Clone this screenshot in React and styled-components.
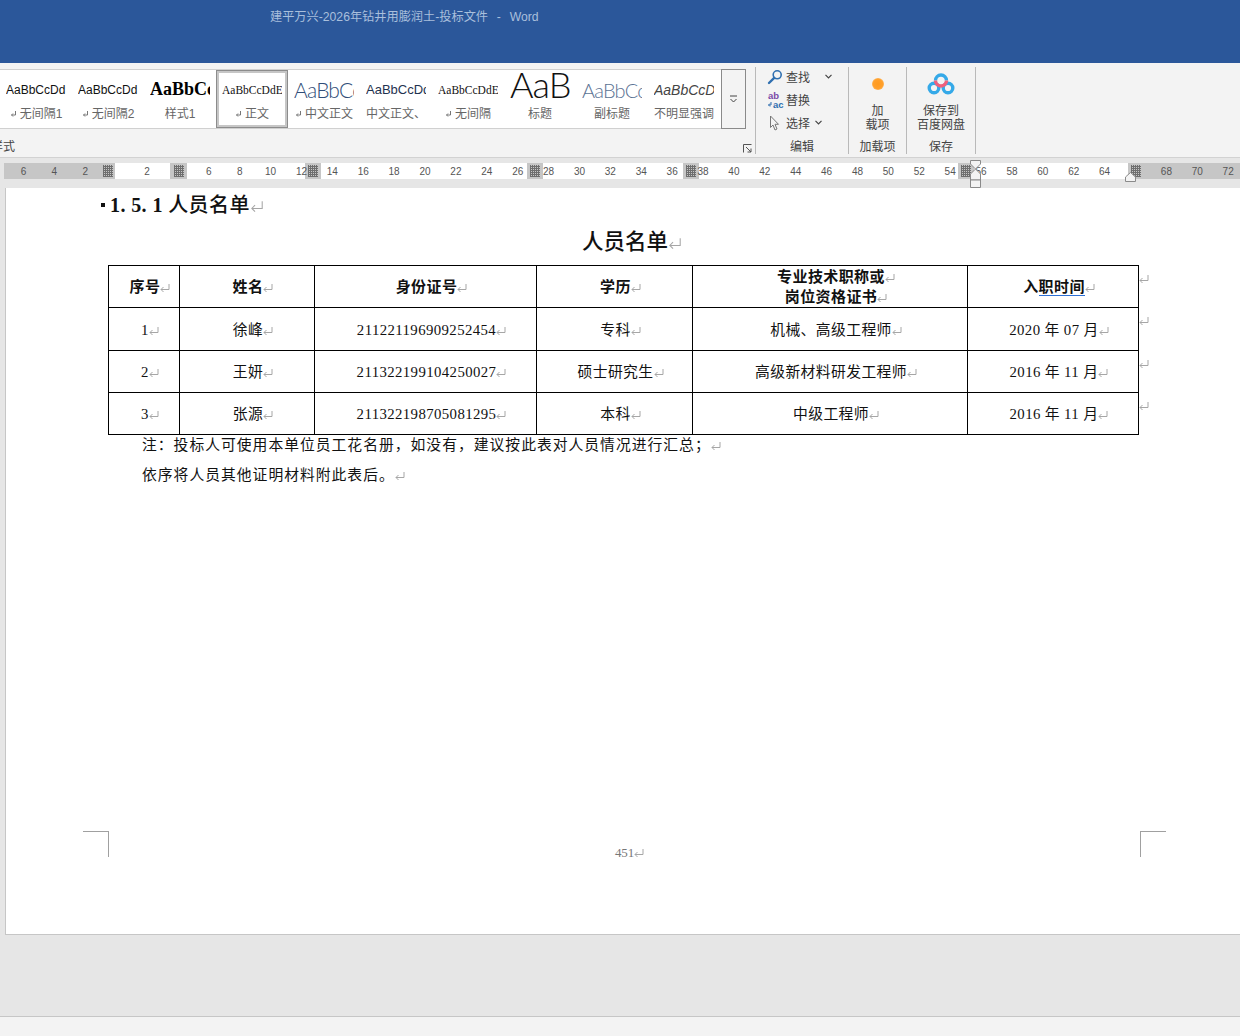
import React from 'react'
import styled, { createGlobalStyle } from 'styled-components'

const docFont = `"Liberation Serif", "Noto Sans CJK SC", serif`
const uiFont = `"Liberation Sans", "Noto Sans CJK SC", sans-serif`
const thinFont = `Lato, "Liberation Sans", sans-serif`

const Global = createGlobalStyle`
  html, body { margin: 0; padding: 0; background: #e6e6e6; }
  * { box-sizing: border-box; }
`

const Window = styled.div`
  width: 1240px;
  height: 1036px;
  display: flex;
  flex-direction: column;
  overflow: hidden;
  font-family: ${uiFont};
`

const TitleBar = styled.div`
  height: 63px;
  flex: none;
  background: #2b579a;
  color: #a9bfdc;
  font-size: 12.2px;
  line-height: 17px;
  padding: 9px 0 0 270px;
  white-space: pre;
  word-spacing: 1px;
`

const Ribbon = styled.div`
  height: 95px;
  flex: none;
  display: flex;
  background: #f3f3f3;
  border-bottom: 1px solid #d2d2d2;
  padding-top: 4px;
`

const Group = styled.div`
  width: ${p => p.$w}px;
  flex: none;
  height: 87px;
  display: flex;
  flex-direction: column;
  border-right: 1px solid #b9b9b9;
  position: relative;
  overflow: hidden;
`

const GroupBody = styled.div`
  flex: 1;
  min-height: 0;
  display: flex;
  flex-direction: column;
  align-items: ${p => p.$align || 'center'};
  margin-top: ${p => p.$pull || 0}px;
`

const GroupLabel = styled.div`
  height: 16px;
  flex: none;
  font-size: 12px;
  line-height: 18px;
  color: #444;
  text-align: ${p => p.$left ? 'left' : 'center'};
  margin-left: ${p => p.$shift || 0}px;
`

const StyleRow = styled.div`
  display: flex;
  padding-top: 2px;
  height: 62px;
  width: 755px;
  flex: none;
`

const Gallery = styled.div`
  width: 721px;
  height: 60px;
  display: flex;
  background: #fff;
  border-top: 1px solid #d0d0d0;
  border-bottom: 1px solid #d0d0d0;
`

const StyleCard = styled.div`
  width: 72px;
  flex: none;
  height: 58px;
  display: flex;
  flex-direction: column;
  align-items: center;
  padding: 0 6px;
  overflow: hidden;
  outline: ${p => p.$on ? '1px solid #8c8c8c' : 'none'};
  border: ${p => p.$on ? '3px solid #c6c6c6' : '3px solid transparent'};
  outline-offset: -1px;
`

const Sample = styled.div`
  height: 33px;
  width: 60px;
  flex: none;
  display: flex;
  align-items: center;
  overflow: hidden;
  white-space: nowrap;
  padding-bottom: ${p => p.$lift || 0}px;
  font-family: ${p => p.$font || uiFont};
  font-size: ${p => p.$size}px;
  font-weight: ${p => p.$weight || 400};
  font-style: ${p => p.$italic ? 'italic' : 'normal'};
  letter-spacing: ${p => p.$track || 0}px;
  color: ${p => p.$color || '#111'};
`

const StyleName = styled.div`
  font-size: 12px;
  line-height: 16px;
  color: #666;
  white-space: nowrap;
  display: flex;
  align-items: center;
  gap: 3px;
`

const GalleryMore = styled.div`
  width: 25px;
  height: 60px;
  background: #f3f3f3;
  border: 1px solid #8a8a8a;
  display: flex;
  align-items: center;
  justify-content: center;
`

const Launcher = styled.svg`
  position: absolute;
  right: 3px;
  bottom: 1px;
`

const EditRow = styled.div`
  height: 23px;
  flex: none;
  display: flex;
  align-items: center;
  font-size: 12px;
  color: #444;
  padding-left: 11px;
  width: 100%;
`

const EditIcon = styled.span`
  width: 19px;
  flex: none;
  display: flex;
  align-items: center;
`

const Chevron = styled.svg`
  margin-left: ${p => p.$gap}px;
`

const BigIcon = styled.div`
  height: 37px;
  flex: none;
  display: flex;
  align-items: center;
  justify-content: center;
`

const BigText = styled.div`
  font-size: 12px;
  line-height: 14px;
  color: #444;
  text-align: center;
  white-space: pre-line;
`

const Dot = styled.div`
  width: 12px;
  height: 12px;
  margin-top: -3px;
  border-radius: 50%;
  background: radial-gradient(circle, #ff9a1f 0%, #ffa02c 55%, #ffd9a8 100%);
`

const LogoSvg = styled.svg`
  margin-top: -3px;
`

const RulerBar = styled.div`
  height: 30px;
  flex: none;
  background: #e6e6e6;
  padding: 5px 0 0 4px;
  position: relative;
`

const Ruler = styled.div`
  height: 16px;
  display: flex;
  position: relative;
`

const Band = styled.div`
  width: ${p => p.$w}px;
  flex: none;
  background: ${p => p.$white ? '#fff' : '#c6c6c6'};
  display: flex;
  align-items: center;
  justify-content: ${p => p.$place || 'center'};
  padding: ${p => p.$pad || '0'};
`

const Hatch = styled.div`
  width: 10px;
  height: 12px;
  background-color: #c6c6c6;
  background-image:
    repeating-linear-gradient(0deg, #6e6e6e 0 1px, transparent 1px 2px),
    repeating-linear-gradient(90deg, #6e6e6e 0 1px, transparent 1px 2px);
`

const Ticks = styled.div`
  position: absolute;
  left: 4px;
  top: 0;
  height: 16px;
  display: flex;
`

const Tick = styled.span`
  width: 30.9px;
  flex: none;
  text-align: center;
  font-size: 10px;
  line-height: 17px;
  color: #555;
`

const MarginHandle = styled.svg`
  position: absolute;
  left: ${p => p.$x}px;
  top: ${p => p.$y}px;
`

const DocArea = styled.div`
  flex: 1;
  min-height: 0;
  background: #e6e6e6;
  padding: 0 0 81px 5px;
  display: flex;
`

const Page = styled.div`
  flex: 1;
  background: #fff;
  border-left: 1px solid #c6c6c6;
  border-bottom: 1px solid #c6c6c6;
  display: flex;
  flex-direction: column;
  font-family: ${docFont};
  color: #111;
`

const Body = styled.div`
  flex: 1;
  padding-left: 102px;
  display: flex;
  flex-direction: column;
`

const Heading = styled.div`
  height: 35px;
  font-size: 20px;
  line-height: 35px;
  font-weight: 500;
  letter-spacing: 0.4px;
  padding-left: 2px;
  position: relative;
  white-space: pre;
`

const HeadingNumber = styled.span`
  font-weight: 700;
`

const KeepMark = styled.span`
  position: absolute;
  left: -7px;
  top: 15px;
  width: 4px;
  height: 4px;
  background: #111;
`

const TableTitle = styled.div`
  height: 42px;
  width: 1034px;
  text-align: center;
  font-size: 21.5px;
  line-height: 38px;
  font-weight: 500;
`

const Roster = styled.table`
  border-collapse: collapse;
  table-layout: fixed;
  width: 1044px;
`

const Cell = styled.td`
  border: 1px solid #000;
  padding: 1px 0 0 2px;
  text-align: center;
  vertical-align: middle;
  font-size: ${p => p.$head ? 15 : 14.8}px;
  font-weight: ${p => p.$head ? 700 : 400};
  letter-spacing: 0.4px;
  line-height: 20px;
  white-space: pre-line;
`

const RowEnd = styled.td`
  padding: 6px 0 0 0;
  vertical-align: top;
  line-height: 12px;
`

const Row = styled.tr`
  height: ${p => p.$h}px;
`

const Underlined = styled.span`
  border-bottom: 1.5px solid #2b6fd6;
  line-height: 15px;
  display: inline-block;
`

const Note = styled.p`
  margin: 0;
  padding-left: 34px;
  height: 30px;
  font-size: 14.8px;
  line-height: 21px;
  letter-spacing: 1px;
  white-space: pre;
`

const PageFooter = styled.div`
  height: 103px;
  flex: none;
  display: flex;
  justify-content: space-between;
  padding: 0 74px 0 77px;
`

const CropMark = styled.div`
  width: 26px;
  height: 26px;
  border-top: 1px solid #a0a0a0;
  ${p => p.$side === 'left' ? 'border-right: 1px solid #a0a0a0;' : 'border-left: 1px solid #a0a0a0;'}
`

const PageNumber = styled.div`
  font-size: 13px;
  color: #777;
  line-height: 14px;
  padding-top: 15px;
  letter-spacing: -0.2px;
`

const StatusBar = styled.div`
  height: 20px;
  flex: none;
  background: #f3f3f3;
  border-top: 1px solid #c6c6c6;
`

// the paragraph mark hangs past the text, it does not count when centering
const Mark = styled.svg`
  margin: 0 ${p => p.$hang}px 0 0;
  vertical-align: -1px;
`

const ParaMark = ({ big }) => (
  <Mark $hang={big ? -14 : -10} width={big ? 14 : 10} height={big ? 13 : 10} viewBox="0 0 10 10" fill="none" stroke="#a6a6a6" strokeWidth={big ? 0.8 : 1}>
    <path d="M9 1V6.5H1M3.5 4L1 6.5L3.5 9" />
  </Mark>
)

const SmallMark = () => (
  <svg width="7" height="8" viewBox="0 0 7 8" fill="none" stroke="#777" strokeWidth="1">
    <path d="M5.5 1V5H1.5M3 3.5L1.5 5L3 6.5" />
  </svg>
)

const samples = [
  { text: 'AaBbCcDd', size: 12, name: '无间隔1', mark: true },
  { text: 'AaBbCcDd', size: 12, name: '无间隔2', mark: true },
  { text: 'AaBbCc', size: 18, weight: 700, font: docFont, color: '#000', name: '样式1' },
  { text: 'AaBbCcDdEe', size: 11.5, font: docFont, name: '正文', mark: true, on: true },
  { text: 'AaBbCc', size: 21, weight: 300, track: -0.8, font: thinFont, color: '#2f4d78', name: '中文正文', mark: true },
  { text: 'AaBbCcDd', size: 13, color: '#1f3350', name: '中文正文、' },
  { text: 'AaBbCcDdEe', size: 11.5, font: docFont, name: '无间隔', mark: true },
  { text: 'AaB', size: 36, weight: 300, track: -1, font: thinFont, color: '#111', name: '标题', lift: 11 },
  { text: 'AaBbCc', size: 20, weight: 300, track: -0.8, font: thinFont, color: '#5b7394', name: '副标题' },
  { text: 'AaBbCcDd', size: 14, italic: true, color: '#444', name: '不明显强调' },
]

const Finder = () => (
  <svg width="16" height="16" viewBox="0 0 16 16" fill="none">
    <circle cx="10.2" cy="5.8" r="4" stroke="#2f6fb0" strokeWidth="1.6" />
    <path d="M7.2 8.8L2 14" stroke="#2f6fb0" strokeWidth="2.4" strokeLinecap="round" />
  </svg>
)

const Replace = () => (
  <svg width="18" height="16" viewBox="0 0 18 16">
    <text x="1" y="7" fontSize="9.5" fontWeight="700" fontFamily="Liberation Sans" fill="#7a4aa8">ab</text>
    <text x="6" y="15.5" fontSize="9.5" fontWeight="700" fontFamily="Liberation Sans" fill="#2f6fb0">ac</text>
    <path d="M4 10V13H1.5M3 11.5L1.5 13L3 14.5" fill="none" stroke="#2f6fb0" strokeWidth="1" />
  </svg>
)

const Pointer = () => (
  <svg width="14" height="16" viewBox="0 0 14 16" fill="none" stroke="#777" strokeWidth="1">
    <path d="M3.5 1V12.5L6 10L8 15L10 14L8 9.3H11.5Z" />
  </svg>
)

const Down = ({ gap }) => (
  <Chevron $gap={gap} width="7" height="5" viewBox="0 0 7 5" fill="none" stroke="#444" strokeWidth="1.2">
    <path d="M0.5 0.8L3.5 3.8L6.5 0.8" />
  </Chevron>
)

const BaiduCloud = () => (
  <LogoSvg width="28" height="22" viewBox="0 0 28 22" fill="none" strokeWidth="3.4">
    <circle cx="7" cy="15" r="4.8" stroke="#35a9e8" />
    <circle cx="21" cy="15" r="4.8" stroke="#35a9e8" />
    <path d="M8.5 7.5A5.5 5.5 0 0 1 19.5 7.5" stroke="#35a9e8" />
    <path d="M8.5 7.5A5.5 5.5 0 0 0 19.5 7.5" stroke="#f0607c" />
  </LogoSvg>
)

const bands = [
  { w: 111, hatch: true, place: 'flex-end', pad: '0 2px 0 0' }, { w: 2, white: true }, { w: 53, white: true },
  { w: 17, hatch: true }, { w: 118, white: true },
  { w: 16, hatch: true }, { w: 206, white: true }, { w: 16, hatch: true }, { w: 140, white: true },
  { w: 16, hatch: true }, { w: 259, white: true }, { w: 16, hatch: true }, { w: 154, white: true },
  { w: 2 }, { w: 110, hatch: true, place: 'flex-start', pad: '0 0 0 1px' },
]

const tickLabels = ['6', '4', '2', '', '2', '', '6', '8', '10', '12', '14', '16', '18', '20', '22', '24', '26', '28', '30', '32', '34', '36', '38', '40', '42', '44', '46', '48', '50', '52', '54', '56', '58', '60', '62', '64', '', '68', '70', '72']

const rows = [
  ['1', '徐峰', '211221196909252454', '专科', '机械、高级工程师', '2020 年 07 月', 43],
  ['2', '王妍', '211322199104250027', '硕士研究生', '高级新材料研发工程师', '2016 年 11 月', 42],
  ['3', '张源', '211322198705081295', '本科', '中级工程师', '2016 年 11 月', 42],
]

const App = () => {
  return (
    <Window>
      <Global />
      <TitleBar>建平万兴-2026年钻井用膨润土-投标文件  -  Word</TitleBar>

      <Ribbon>
        <Group $w={756}>
          <StyleRow>
            <Gallery>
              {samples.map((s, i) => (
                <StyleCard key={i} $on={s.on}>
                  <Sample $size={s.size} $font={s.font} $weight={s.weight} $italic={s.italic} $color={s.color} $lift={s.lift} $track={s.track}>{s.text}</Sample>
                  <StyleName>{s.mark && <SmallMark />}{s.name}</StyleName>
                </StyleCard>
              ))}
            </Gallery>
            <GalleryMore>
              <svg width="9" height="8" viewBox="0 0 9 8" fill="none" stroke="#444" strokeWidth="1">
                <path d="M1 1H8M1.5 4L4.5 7L7.5 4" />
              </svg>
            </GalleryMore>
          </StyleRow>
          <GroupBody />
          <GroupLabel $left $shift={-9}>样式</GroupLabel>
          <Launcher width="9" height="9" viewBox="0 0 9 9" fill="none" stroke="#555" strokeWidth="1">
            <path d="M0.5 8.5V0.5H8.5M3 3L8 8M8 4.5V8H4.5" />
          </Launcher>
        </Group>

        <Group $w={93}>
          <GroupBody $align="flex-start" $pull={-2}>
            <EditRow>
              <EditIcon><Finder /></EditIcon>查找<Down gap={15} />
            </EditRow>
            <EditRow>
              <EditIcon><Replace /></EditIcon>替换
            </EditRow>
            <EditRow>
              <EditIcon><Pointer /></EditIcon>选择<Down gap={5} />
            </EditRow>
          </GroupBody>
          <GroupLabel>编辑</GroupLabel>
        </Group>

        <Group $w={58}>
          <GroupBody>
            <BigIcon><Dot /></BigIcon>
            <BigText>{'加\n载项'}</BigText>
          </GroupBody>
          <GroupLabel>加载项</GroupLabel>
        </Group>

        <Group $w={69}>
          <GroupBody>
            <BigIcon><BaiduCloud /></BigIcon>
            <BigText>{'保存到\n百度网盘'}</BigText>
          </GroupBody>
          <GroupLabel>保存</GroupLabel>
        </Group>
      </Ribbon>

      <RulerBar>
        <Ruler>
          {bands.map((b, i) => (
            <Band key={i} $w={b.w} $white={b.white} $place={b.place} $pad={b.pad}>
              {b.hatch && <Hatch />}
            </Band>
          ))}
          <Ticks>
            {tickLabels.map((t, i) => <Tick key={i}>{t}</Tick>)}
          </Ticks>
        </Ruler>
        <MarginHandle $x={970} $y={2} width="11" height="28" viewBox="0 0 11 28" fill="#f3f3f3" stroke="#8a8a8a" strokeWidth="1">
          <path d="M0.5 0.5H10.5V4L5.5 9L0.5 4Z" />
          <path d="M5.5 9L10.5 14V20H0.5V14Z" />
          <path d="M0.5 20H10.5V27.5H0.5Z" />
        </MarginHandle>
        <MarginHandle $x={1125} $y={14} width="11" height="10" viewBox="0 0 11 10" fill="#f3f3f3" stroke="#8a8a8a" strokeWidth="1">
          <path d="M0.5 9.5V5L5.5 0.5L10.5 5V9.5Z" />
        </MarginHandle>
      </RulerBar>

      <DocArea>
        <Page>
          <Body>
            <Heading><KeepMark /><HeadingNumber>1. 5. 1</HeadingNumber> 人员名单<ParaMark big /></Heading>
            <TableTitle>人员名单<ParaMark big /></TableTitle>
            <Roster>
              <colgroup>
                <col width="71" />
                <col width="135" />
                <col width="222" />
                <col width="156" />
                <col width="275" />
                <col width="171" />
                <col width="14" />
              </colgroup>
              <tbody>
                <Row $h={42}>
                  <Cell $head>序号<ParaMark /></Cell>
                  <Cell $head>姓名<ParaMark /></Cell>
                  <Cell $head>身份证号<ParaMark /></Cell>
                  <Cell $head>学历<ParaMark /></Cell>
                  <Cell $head>专业技术职称或<ParaMark />{'\n'}岗位资格证书<ParaMark /></Cell>
                  <Cell $head>入<Underlined>职时间</Underlined><ParaMark /></Cell>
                  <RowEnd><ParaMark /></RowEnd>
                </Row>
                {rows.map(r => (
                  <Row key={r[0]} $h={r[6]}>
                    {r.slice(0, 6).map((v, i) => <Cell key={i}>{v}<ParaMark /></Cell>)}
                    <RowEnd><ParaMark /></RowEnd>
                  </Row>
                ))}
              </tbody>
            </Roster>
            <Note>注：投标人可使用本单位员工花名册，如没有，建议按此表对人员情况进行汇总；<ParaMark /></Note>
            <Note>依序将人员其他证明材料附此表后。<ParaMark /></Note>
          </Body>
          <PageFooter>
            <CropMark $side="left" />
            <PageNumber>451<ParaMark /></PageNumber>
            <CropMark $side="right" />
          </PageFooter>
        </Page>
      </DocArea>

      <StatusBar />
    </Window>
  )
}

export default App
